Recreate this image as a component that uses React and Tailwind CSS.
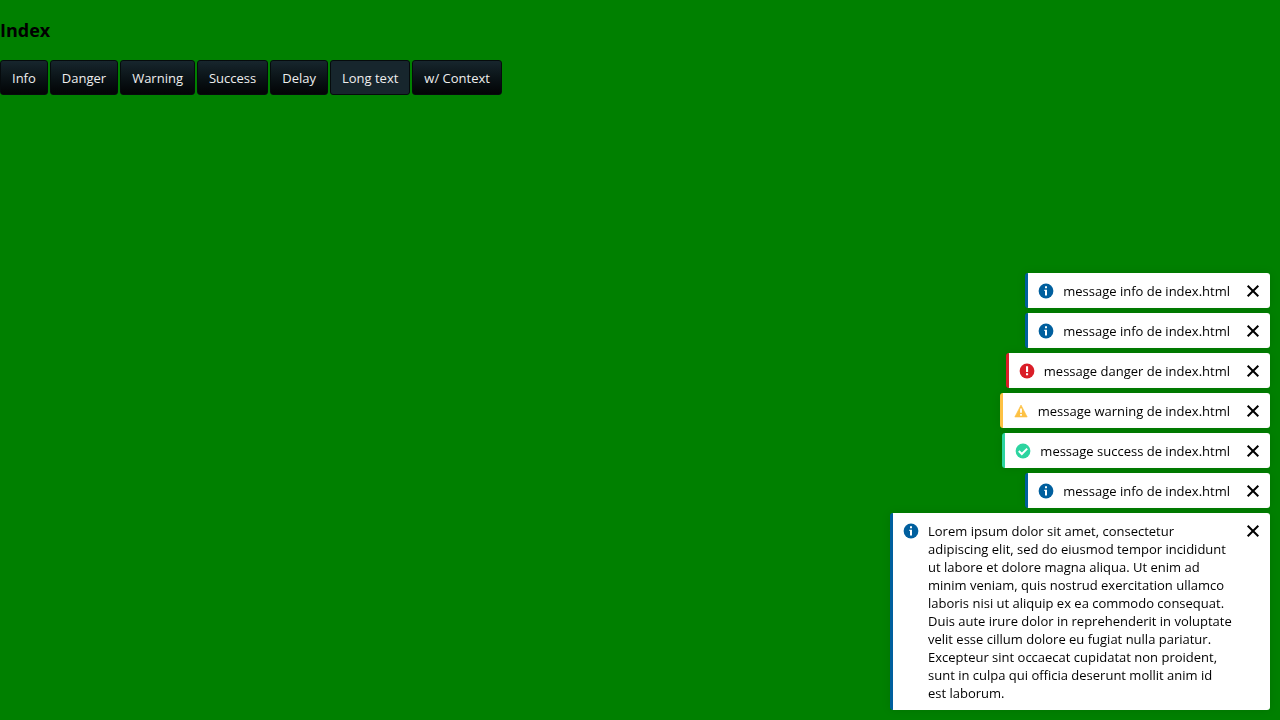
import React, { useState } from 'react';

const buttons = ['Info', 'Danger', 'Warning', 'Success', 'Delay', 'Long text', 'w/ Context'];

const lorem = [
  'Lorem ipsum dolor sit amet, consectetur',
  'adipiscing elit, sed do eiusmod tempor incididunt',
  'ut labore et dolore magna aliqua. Ut enim ad',
  'minim veniam, quis nostrud exercitation ullamco',
  'laboris nisi ut aliquip ex ea commodo consequat.',
  'Duis aute irure dolor in reprehenderit in voluptate',
  'velit esse cillum dolore eu fugiat nulla pariatur.',
  'Excepteur sint occaecat cupidatat non proident,',
  'sunt in culpa qui officia deserunt mollit anim id',
  'est laborum.',
].join('\n');

const initialToasts = [
  { id: 1, type: 'info', text: 'message info de index.html' },
  { id: 2, type: 'info', text: 'message info de index.html' },
  { id: 3, type: 'danger', text: 'message danger de index.html' },
  { id: 4, type: 'warning', text: 'message warning de index.html' },
  { id: 5, type: 'success', text: 'message success de index.html' },
  { id: 6, type: 'info', text: 'message info de index.html' },
  { id: 7, type: 'info', text: lorem },
];

const borders = {
  info: 'border-[#005f9e]',
  danger: 'border-[#da1e28]',
  warning: 'border-[#fdc143]',
  success: 'border-[#2dd4a0]',
};

const iconColors = {
  info: 'text-[#005f9e]',
  danger: 'text-[#da1e28]',
  warning: 'text-[#fdc143]',
  success: 'text-[#2dd4a0]',
};

function TypeIcon({ type }) {
  return (
    <svg viewBox="0 0 18 18" className={`size-[18px] shrink-0 ${iconColors[type]}`} aria-hidden="true">
      {type === 'warning' ? (
        <path d="M9 3 L15.2 15 H2.8 Z" fill="currentColor" stroke="currentColor" strokeWidth="0.6" strokeLinejoin="round" />
      ) : (
        <circle cx="9" cy="9" r="7.4" fill="currentColor" />
      )}
      {type === 'info' && (
        <path d="M8 4.3h2v2H8zM7.3 7.8H10v5.6H8V9h-.7z" fill="white" />
      )}
      {type === 'danger' && <path d="M8 4.3h2.1v5.8H8zM8 11.3h2.1v2H8z" fill="white" />}
      {type === 'warning' && <path d="M8.1 6.6h1.8v4.2H8.1zM8.1 12h1.8v1.7H8.1z" fill="white" />}
      {type === 'success' && (
        <path d="M4.8 9l3 3 5.4-5.4" fill="none" stroke="white" strokeWidth="2" />
      )}
    </svg>
  );
}

function Toast({ type, text, onClose }) {
  return (
    <li
      className={`flex max-w-[380px] items-start rounded-[3px] border-l-[3px] bg-white pt-[9px] pb-2 pl-[9px] shadow-[0_0_10px_rgba(0,0,0,0.1)] ${borders[type]}`}
    >
      <TypeIcon type={type} />
      <p className="mr-[5px] ml-2 min-w-0 whitespace-pre">{text}</p>
      <button type="button" aria-label="Close" onClick={onClose} className="flex h-[18px] w-[35px] shrink-0 items-center justify-center">
        <svg viewBox="0 0 14 14" className="size-3.5" aria-hidden="true">
          <path d="M1.7 1.7l10.6 10.6M12.3 1.7L1.7 12.3" fill="none" stroke="currentColor" strokeWidth="2" />
        </svg>
      </button>
    </li>
  );
}

export default function App() {
  const [toasts, setToasts] = useState(initialToasts);

  return (
    <div className="min-h-screen bg-[#008000] pt-[18px] font-['Open_Sans','Noto_Sans',sans-serif] text-[13px] leading-[18px] text-black">
      <h1 className="text-lg leading-6 font-bold">Index</h1>
      <div className="mt-[18px] flex flex-wrap gap-0.5">
        {buttons.map((label) => (
          <button
            key={label}
            type="button"
            className={`h-[35px] rounded-[3px] border border-[#060b0d] px-[11px] text-[#eeeeee] ${
              label === 'Long text' ? 'bg-[#17262d]' : 'bg-linear-to-b from-[#17262d] to-[#030506]'
            }`}
          >
            {label}
          </button>
        ))}
      </div>
      <ul className="fixed right-2.5 bottom-2.5 flex flex-col items-end gap-[5px]">
        {toasts.map((toast) => (
          <Toast
            key={toast.id}
            type={toast.type}
            text={toast.text}
            onClose={() => setToasts(toasts.filter((t) => t.id !== toast.id))}
          />
        ))}
      </ul>
    </div>
  );
}
